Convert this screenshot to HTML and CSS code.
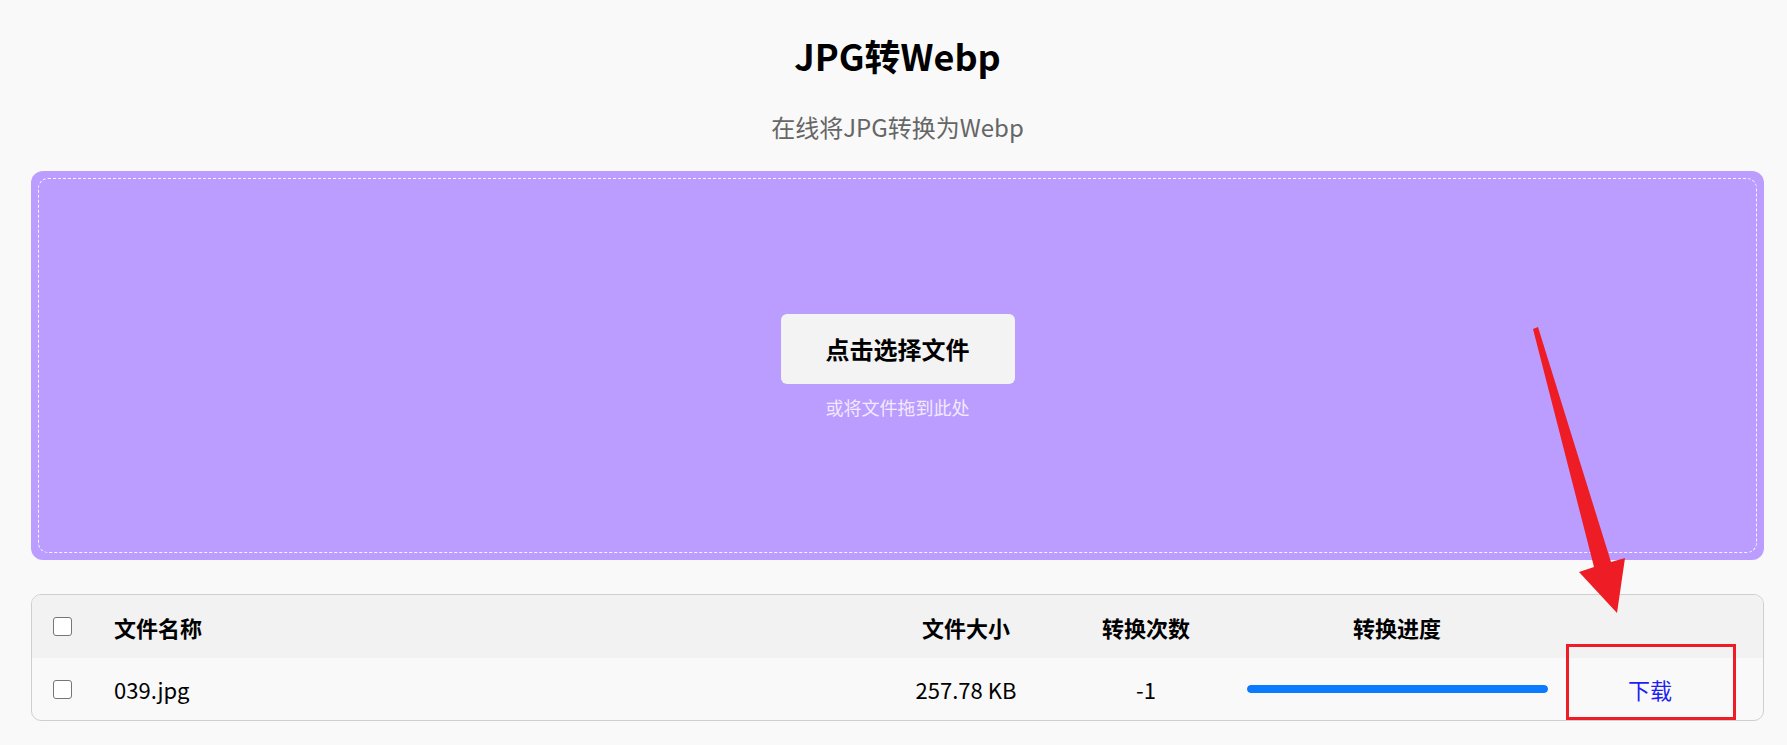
FILE: index.html
```html
<!DOCTYPE html>
<html lang="zh-CN">
<head>
  <meta charset="UTF-8" />
  <meta name="viewport" content="width=device-width, initial-scale=1.0"/>
  <title>JPG转Webp</title>
  <link rel="stylesheet" href="styles.css">
</head>
<body>

  <div class="page">
    <h1 class="title">JPG转Webp</h1>
    <p class="subtitle">在线将JPG转换为Webp</p>

    <div class="dropzone">
      <div class="dropzone-inner">
        <button class="pick-btn">点击选择文件</button>
        <p class="drop-hint">或将文件拖到此处</p>
      </div>
    </div>

    <div class="file-table">
      <div class="row head">
        <div class="cell check"><input type="checkbox" class="box"></div>
        <div class="cell name">文件名称</div>
        <div class="cell">文件大小</div>
        <div class="cell">转换次数</div>
        <div class="cell">转换进度</div>
        <div class="cell"></div>
      </div>
      <div class="row">
        <div class="cell check"><input type="checkbox" class="box"></div>
        <div class="cell name">039.jpg</div>
        <div class="cell">257.78 KB</div>
        <div class="cell">-1</div>
        <div class="cell"><div class="progress"><div class="progress-fill" style="width: 100%"></div></div></div>
        <div class="cell"><a href="#" class="download">下载</a></div>
      </div>
    </div>
  </div>

  <!-- annotation on top of the screenshot -->
  <svg class="annotation" width="1787" height="745" viewBox="0 0 1787 745">
    <polygon points="1533,329 1538,327 1611,562 1625,558 1617,613 1579,572 1594,567" fill="#ee1c25"/>
    <rect x="1567.5" y="645.5" width="167" height="73" fill="none" stroke="#ee1c25" stroke-width="3"/>
  </svg>

</body>
</html>
```

FILE: styles.css
```css
* {
  box-sizing: border-box;
}

body {
  margin: 0;
  background-color: #f9f9f9;
  font-family: "Noto Sans CJK SC", "Noto Sans", sans-serif;
  color: #000;
  position: relative;
}

.page {
  padding: 29px 23px 24px 31px;
}

.title {
  margin: 0;
  text-align: center;
  font-size: 36px;
  line-height: 52px;
  font-weight: bold;
}

.subtitle {
  margin: 29px 0 27px;
  text-align: center;
  font-size: 24px;
  line-height: 34px;
  color: #666;
}

.dropzone {
  height: 389px;
  padding: 7px;
  background-color: #bb9dff;
  border-radius: 12px;
}

.dropzone-inner {
  height: 100%;
  border: 1px dashed rgba(255, 255, 255, 0.9);
  border-radius: 10px;
  display: flex;
  flex-direction: column;
  align-items: center;
  justify-content: center;
  gap: 10px;
  padding-top: 2px;
}

.pick-btn {
  width: 234px;
  height: 70px;
  border: none;
  border-radius: 6px;
  background-color: #f3f3f3;
  font-family: inherit;
  font-size: 24px;
  font-weight: bold;
  color: #000;
  cursor: pointer;
}

.drop-hint {
  margin: 0;
  font-size: 18px;
  line-height: 26px;
  color: #f1eaff;
}

.file-table {
  margin-top: 34px;
  border: 1px solid #cfcfcf;
  border-radius: 10px;
  overflow: hidden;
}

.row {
  display: grid;
  grid-template-columns: 61px 1fr 180px 180px 322px 184px;
  padding-right: 21px;
  height: 62px;
  align-items: center;
  font-size: 22px;
}

.row.head {
  height: 63px;
  background-color: #f2f2f2;
  font-weight: bold;
}

.cell {
  text-align: center;
}

.cell.check {
  display: flex;
  justify-content: center;
}

.cell.name {
  text-align: left;
  padding-left: 21px;
}

.box {
  appearance: none;
  margin: 0;
  width: 19px;
  height: 19px;
  border: 1.5px solid #767676;
  border-radius: 3px;
  background-color: #fff;
}

.progress {
  margin: 0 10px 0 11px;
  height: 8px;
  background-color: #e6e6e6;
  border-radius: 4px;
  overflow: hidden;
}

.progress-fill {
  height: 100%;
  background-color: #0a7bff;
  border-radius: 4px;
}

.download {
  color: #1f1ff2;
  text-decoration: none;
  font-size: 22px;
}

.annotation {
  position: absolute;
  top: 0;
  left: 0;
  pointer-events: none;
}
```
